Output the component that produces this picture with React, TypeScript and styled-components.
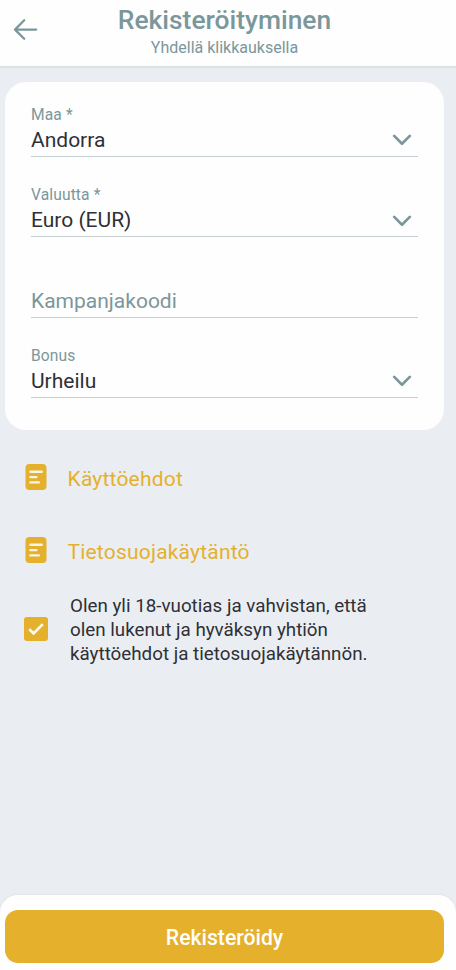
import React from 'react';
import styled, { createGlobalStyle } from 'styled-components';

const teal = '#7b979b';
const gold = '#e5b02c';
const ink = '#2e3036';

const GlobalStyle = createGlobalStyle`
  * { box-sizing: border-box; }
  body { margin: 0; background: #eaeef3; font-family: Roboto, sans-serif; }
`;

const Screen = styled.div`
  display: flex;
  flex-direction: column;
  width: 456px;
  height: 970px;
  overflow: hidden;
  background: #eaeef3;
`;

const Header = styled.header`
  display: grid;
  grid-template-columns: 50px 349px 57px;
  flex: none;
  height: 67px;
  background: #fefefe;
  border-bottom: 1px solid #dcdfe2;
  box-shadow: 0 1px 1px rgba(90, 100, 110, 0.08);
`;

const BackButton = styled.button`
  display: flex;
  align-items: flex-start;
  padding: 18px 0 0 13px;
  border: 0;
  background: none;
  color: ${teal};
`;

const Heading = styled.div`
  display: flex;
  flex-direction: column;
  align-items: center;
  padding-top: 4px;
  color: ${teal};
  white-space: nowrap;
`;

const Title = styled.h1`
  margin: 0;
  font-size: 26.4px;
  font-weight: 500;
  line-height: 32px;
`;

const Subtitle = styled.div`
  margin-top: 2px;
  font-size: 16px;
  line-height: 20px;
`;

const Card = styled.section`
  display: flex;
  flex-direction: column;
  flex: none;
  gap: 16.3px;
  width: 439px;
  height: 348px;
  margin: 15px 0 0 5px;
  padding: 11px 26px 0;
  border-radius: 21px;
  background: #fefefe;
`;

const Field = styled.div`
  display: flex;
  flex: none;
  align-items: flex-end;
  justify-content: space-between;
  height: 64px;
  padding-bottom: 4px;
  border-bottom: 1px solid #c6d0d3;
`;

const FieldText = styled.div`
  display: flex;
  flex-direction: column;
  gap: 4px;
`;

const Label = styled.span`
  color: ${teal};
  font-size: 15.6px;
  line-height: 18px;
  letter-spacing: 0.12px;
`;

const Value = styled.span<{ $placeholder?: boolean }>`
  color: ${(p) => (p.$placeholder ? teal : ink)};
  font-size: 21px;
  line-height: 24px;
`;

const ChevronBox = styled.span`
  display: flex;
  margin: 0 6px 5.6px 0;
  color: ${teal};
`;

const Links = styled.nav`
  display: flex;
  flex-direction: column;
  flex: none;
  gap: 41px;
  margin: 31px 0 0 25px;
`;

const DocLink = styled.a`
  display: flex;
  align-items: center;
  gap: 20.5px;
  height: 32px;
  color: ${gold};
  font-size: 21px;
  line-height: 24px;
  letter-spacing: 0.2px;
  white-space: nowrap;
`;

const LinkText = styled.span`
  padding-top: 4px;
`;

const Consent = styled.label`
  display: flex;
  align-items: center;
  flex: none;
  gap: 22px;
  margin: 27px 0 0 24px;
  color: ${ink};
  font-size: 18.8px;
  line-height: 24.2px;
  white-space: nowrap;
`;

const ConsentText = styled.span`
  padding-top: 1px;
`;

const Checkbox = styled.span`
  display: flex;
  align-items: center;
  justify-content: center;
  width: 24px;
  height: 24px;
  margin-bottom: 2px;
  border-radius: 3px;
  background: ${gold};
`;

const Footer = styled.footer`
  flex: none;
  height: 75px;
  margin-top: auto;
  padding: 15px 12px 0 5px;
  border-radius: 18px 18px 0 0;
  background: #fefefe;
  box-shadow: 0 -1px 2px rgba(90, 100, 110, 0.06);
`;

const Submit = styled.button`
  display: block;
  width: 100%;
  height: 53px;
  padding: 2px 0 0;
  border: 0;
  border-radius: 13px;
  background: ${gold};
  color: #fefefe;
  font: 500 21.2px/24px Roboto, sans-serif;
`;

const ArrowIcon = () => (
  <svg width="26" height="24" viewBox="0 0 26 24" fill="none" stroke="currentColor" strokeWidth="2.3" strokeLinecap="round" strokeLinejoin="round">
    <path d="M23.2 11.6H2M11.2 2.2 2 11.6l9.2 9.2" />
  </svg>
);

const ChevronIcon = () => (
  <svg width="20" height="12" viewBox="0 0 20 12" fill="none" stroke="currentColor" strokeWidth="2.7" strokeLinecap="round" strokeLinejoin="round">
    <path d="m2.2 1.9 7.8 7.8 7.8-7.8" />
  </svg>
);

const DocIcon = () => (
  <svg width="22" height="28" viewBox="0 0 22 28">
    <rect x="0.5" y="1" width="21" height="26" rx="4" fill={gold} />
    <path d="M5.4 8.7h11.3M5.4 14.1h6M5.4 19.4h8.4" stroke="#f8f5e8" strokeWidth="2.4" strokeLinecap="round" />
  </svg>
);

const CheckIcon = () => (
  <svg width="18" height="18" viewBox="0 0 18 18" fill="none" stroke="#fefefe" strokeWidth="2.6">
    <path d="m2.3 9.2 4.3 4.2 9.2-9.3" />
  </svg>
);

const fields = [
  { label: 'Maa *', value: 'Andorra' },
  { label: 'Valuutta *', value: 'Euro (EUR)' },
  { placeholder: 'Kampanjakoodi' },
  { label: 'Bonus', value: 'Urheilu' },
];

export default function App() {
  return (
    <>
      <GlobalStyle />
      <Screen>
        <Header>
          <BackButton aria-label="Takaisin"><ArrowIcon /></BackButton>
          <Heading>
            <Title>Rekisteröityminen</Title>
            <Subtitle>Yhdellä klikkauksella</Subtitle>
          </Heading>
        </Header>
        <Card>
          {fields.map((f) => (
            <Field key={f.value ?? f.placeholder}>
              <FieldText>
                {f.label && <Label>{f.label}</Label>}
                <Value $placeholder={!f.value}>{f.value ?? f.placeholder}</Value>
              </FieldText>
              {f.value && <ChevronBox><ChevronIcon /></ChevronBox>}
            </Field>
          ))}
        </Card>
        <Links>
          <DocLink><DocIcon /><LinkText>Käyttöehdot</LinkText></DocLink>
          <DocLink><DocIcon /><LinkText>Tietosuojakäytäntö</LinkText></DocLink>
        </Links>
        <Consent>
          <Checkbox><CheckIcon /></Checkbox>
          <ConsentText>
            Olen yli 18-vuotias ja vahvistan, että<br />
            olen lukenut ja hyväksyn yhtiön<br />
            käyttöehdot ja tietosuojakäytännön.
          </ConsentText>
        </Consent>
        <Footer><Submit>Rekisteröidy</Submit></Footer>
      </Screen>
    </>
  );
}
